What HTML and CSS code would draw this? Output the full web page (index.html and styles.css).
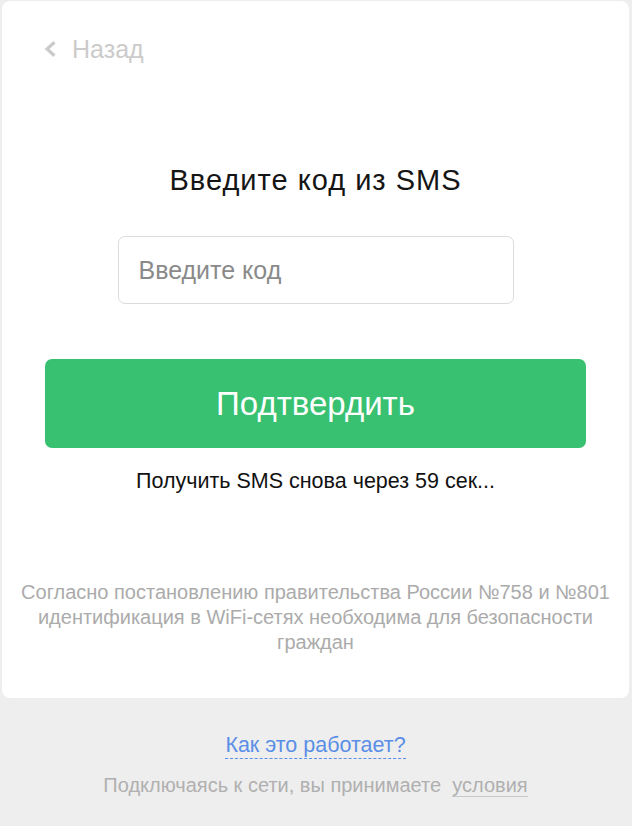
FILE: index.html
```html
<!DOCTYPE html>
<html lang="ru">
<head>
<meta charset="utf-8">
<link rel="stylesheet" href="styles.css">
</head>
<body>
<div class="page">
  <div class="card">
    <a class="back" href="#">
      <svg class="chev" width="13" height="16" viewBox="0 0 13 16"><path d="M10.5 1.2 L3 8 L10.5 14.8" fill="none" stroke="#cbcbcb" stroke-width="3.2"/></svg>
      <span>Назад</span>
    </a>
    <h1 class="title">Введите код из SMS</h1>
    <div class="field"><input class="code" type="text" placeholder="Введите код"></div>
    <button class="submit">Подтвердить</button>
    <p class="resend">Получить SMS снова через 59 сек...</p>
    <p class="legal">Согласно постановлению правительства России №758 и №801 идентификация в WiFi-сетях необходима для безопасности граждан</p>
  </div>
  <div class="footer">
    <a class="how" href="#">Как это работает?</a>
    <p class="terms">Подключаясь к сети, вы принимаете &nbsp;<a href="#">условия</a></p>
  </div>
</div>
</body>
</html>
```
FILE: styles.css
```css
html, body { margin: 0; padding: 0; }
body {
  background: #eeeeee;
  font-family: "Liberation Sans", Arial, sans-serif;
  width: 632px;
  height: 826px;
  overflow: hidden;
}
.page { padding: 1px 3px 0 2px; }
.card {
  background: #fff;
  border-radius: 8px;
  height: 697px;
  box-sizing: border-box;
  padding: 35px 0 0 0;
  display: flex;
  flex-direction: column;
  align-items: center;
}
.back {
  align-self: flex-start;
  margin-left: 42px;
  display: flex;
  align-items: center;
  gap: 15px;
  color: #cbcbcb;
  text-decoration: none;
  font-size: 25px;
  line-height: 26px;
}
.title {
  margin: 101px 0 0 0;
  font-size: 29px;
  letter-spacing: 1px;
  font-weight: normal;
  color: #151515;
  line-height: 34px;
}
.field { margin-top: 39px; }
.code {
  display: block;
  width: 396px;
  height: 68px;
  box-sizing: border-box;
  border: 1px solid #dcdcdc;
  border-radius: 7px;
  padding: 0 20px;
  font-family: inherit;
  font-size: 25px;
  outline: none;
}
.code::placeholder { color: #8a8a8a; }
.submit {
  margin-top: 55px;
  width: 541px;
  height: 89px;
  border: none;
  border-radius: 7px;
  background: #37c170;
  color: #fff;
  font-family: inherit;
  font-size: 33px;
}
.resend {
  margin: 20px 0 0 0;
  font-size: 21.5px;
  line-height: 26px;
  color: #111;
}
.legal {
  margin: 86px 0 0 0;
  padding: 0 14px;
  font-size: 20px;
  line-height: 25px;
  color: #ababab;
  text-align: center;
}
.footer {
  display: flex;
  flex-direction: column;
  align-items: center;
  padding-top: 34px;
}
.how {
  color: #5b8ee6;
  font-size: 21.5px;
  line-height: 26px;
  text-decoration: none;
  border-bottom: 1px dashed #5b8ee6;
}
.terms {
  margin: 14px 0 0 0;
  font-size: 20px;
  line-height: 24px;
  color: #b0b0b0;
}
.terms a {
  color: #b0b0b0;
  text-decoration: none;
  border-bottom: 1px solid #c8c8c8;
}
```
